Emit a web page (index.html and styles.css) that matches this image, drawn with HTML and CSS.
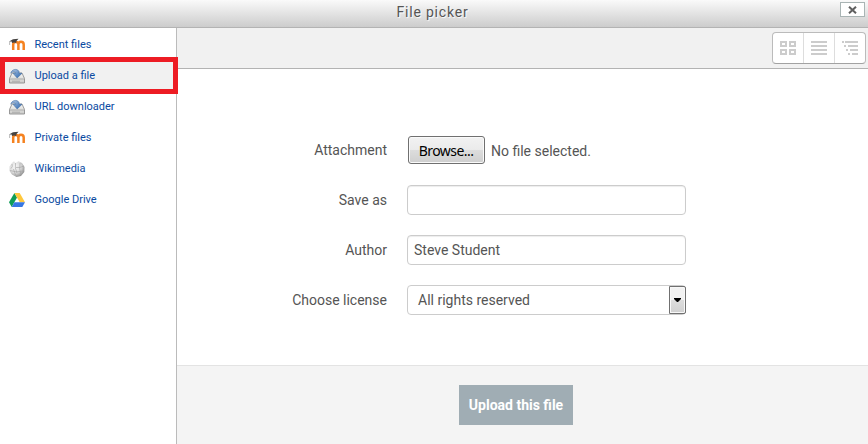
FILE: index.html
```html
<!DOCTYPE html>
<html lang="en">
<head>
<meta charset="utf-8">
<title>File picker</title>
<link rel="stylesheet" href="styles.css">
</head>
<body>
<svg class="defs" aria-hidden="true">
  <defs>
    <linearGradient id="disk" x1="0" y1="0" x2="0" y2="1"><stop offset="0" stop-color="#f8f8f6"/><stop offset="1" stop-color="#c9c9c7"/></linearGradient>
    <linearGradient id="arrow" x1="0" y1="0" x2="1" y2="1"><stop offset="0" stop-color="#b4cae6"/><stop offset="1" stop-color="#2864ad"/></linearGradient>
    <radialGradient id="globe" cx=".38" cy=".35" r=".7"><stop offset="0" stop-color="#f8f8f8"/><stop offset=".55" stop-color="#dcdcdc"/><stop offset="1" stop-color="#8d8d8d"/></radialGradient>
    <symbol id="moodle" viewBox="0 1 16 16">
      <path d="M4.200 14V8.500Q4.200 6 6.700 6Q9.400 6 9.400 8.500V14M9.400 8.500Q9.400 5.700 12 5.700Q14.700 5.700 14.700 8.500V14" fill="none" stroke="#f58220" stroke-width="2.500"/>
      <path d="M0 5.500 4 3.200l5.500-.5L7.500 5 7.200 7Q5 5.800 3 7L2.700 5.600Z" fill="#454341"/>
      <path d="M1 5.400Q.2 7 .7 9" fill="none" stroke="#999" stroke-width=".7"/>
    </symbol>
    <symbol id="drive-disk" viewBox="0 0 16 16">
      <path d="M3 5h10l2.500 5.500v4.500H.5v-4.500z" fill="url(#disk)" stroke="#8f8f8f" stroke-width=".9"/>
      <path d="M.8 11h14.400M3 13.200h8" stroke="#999" stroke-width=".7"/>
      <path d="M1.800 5.200C2.300 1.800 7.600-.3 10 3.300v2h3L8.200 10 4 5.300h2.500C6.500 3.800 4 3 1.800 5.200Z" fill="url(#arrow)" stroke="#416da3" stroke-width=".6"/>
    </symbol>
    <symbol id="wiki" viewBox="0 0 16 16">
      <path d="M3 2 5 .3 6.500 2 9.500.2 13 2 15.500 6 15.300 11 12 15 7.500 15.900 3 13.500.6 10 .5 5.500Z" fill="url(#globe)"/>
      <path d="M3 3Q4 6 2 7.500M6.500 2Q5.500 7 8 12M1 9.500Q7 12 14 10M7 6.500Q11 7 15 5M11 2Q10 8 12 14M4.500 8l2 6" fill="none" stroke="#a0a0a0" stroke-width=".6"/>
    </symbol>
    <symbol id="gdrive" viewBox="0 0 16 16">
      <path d="M5.400 1 8 5.600 2.700 15 0 10.300Z" fill="#0f9d58"/>
      <path d="M5.400 1h5.300L16 10.300h-5.300Z" fill="#ffc83d"/>
      <path d="M5.400 10.300H16L13.300 15H2.700Z" fill="#3777e3"/>
    </symbol>
  </defs>
</svg>
<div class="picker">
  <header class="title">
    <h1>File picker</h1>
    <button class="close" aria-label="Close"><svg width="9" height="8" viewBox="0 0 9 8"><path d="M1 .7 8 7.300M8 .7 1 7.300" stroke="#606060" stroke-width="2"/></svg></button>
  </header>
  <div class="content">
    <nav class="repos">
      <a class="repo"><svg><use href="#moodle"/></svg><span>Recent files</span></a>
      <a class="repo active"><svg><use href="#drive-disk"/></svg><span>Upload a file</span></a>
      <a class="repo"><svg><use href="#drive-disk"/></svg><span>URL downloader</span></a>
      <a class="repo"><svg><use href="#moodle"/></svg><span>Private files</span></a>
      <a class="repo"><svg><use href="#wiki"/></svg><span>Wikimedia</span></a>
      <a class="repo"><svg><use href="#gdrive"/></svg><span>Google Drive</span></a>
    </nav>
    <main class="panel">
      <div class="toolbar">
        <div class="views">
          <button aria-label="Icons"><svg width="16" height="14" viewBox="0 0 16 14"><path d="M1 1h5v4H1zM10 1h5v4h-5zM1 9h5v4H1zM10 9h5v4h-5z" fill="none" stroke="#ccc" stroke-width="2"/></svg></button>
          <button aria-label="List"><svg width="16" height="14" viewBox="0 0 16 14"><path d="M0 1h16M0 5h16M0 9h16M0 13h16" stroke="#ccc" stroke-width="2"/></svg></button>
          <button aria-label="Tree"><svg width="16" height="14" viewBox="0 0 16 14"><path d="M0 1h2M3 1h13M2 5h2M6 5h10M4 9h2M8 9h8M6 13h2M10 13h6" stroke="#ccc" stroke-width="2"/></svg></button>
        </div>
      </div>
      <form class="form">
        <div class="row"><label>Attachment</label><div class="file"><button type="button" class="browse">Browse...</button><span>No file selected.</span></div></div>
        <div class="row"><label>Save as</label><div class="field"></div></div>
        <div class="row"><label>Author</label><div class="field">Steve Student</div></div>
        <div class="row"><label>Choose license</label><div class="field select"><span>All rights reserved</span><i class="drop"><svg width="7" height="4" viewBox="0 0 7 4"><path d="M0 0h7v1L4 4H3L0 1z"/></svg></i></div></div>
      </form>
      <footer class="footer"><button class="upload">Upload this file</button></footer>
    </main>
  </div>
  <div class="marker"></div>
</div>
</body>
</html>
```
FILE: styles.css
```css
* { box-sizing: border-box; }
body { margin: 0; font-family: Roboto, "Liberation Sans", sans-serif; font-size: 14px; color: #555; background: #fff; }
button { font: inherit; margin: 0; padding: 0; }
.defs { position: absolute; width: 0; height: 0; }
.picker { position: relative; width: 868px; height: 444px; display: flex; flex-direction: column; overflow: hidden; }
.title { position: relative; height: 28px; border-bottom: 1px solid #b3b3b3; background: linear-gradient(#fafafa, #ccc); text-align: center; }
.title h1 { margin: 0; font-size: 14px; font-weight: 400; letter-spacing: .8px; line-height: 25px; color: #555; text-shadow: 1px 1px 1px #fff; padding-right: 3px; }
.close { position: absolute; right: 3px; top: 2px; width: 25px; height: 15px; border: 1px solid #a9b4b4; background: #fff; display: flex; align-items: center; justify-content: center; }
.content { flex: 1; display: flex; min-height: 0; }
.repos { width: 177px; border-right: 1px solid #bbb; padding-top: 1px; }
.repo { display: flex; align-items: center; height: 31px; padding-left: 9px; font-size: 11px; color: #0a4aa1; }
.repo svg { width: 16px; height: 16px; margin: 1px 9.5px 0 0; }
.repo.active { background: #f1f1f1; }
.marker { position: absolute; left: 0; top: 57px; width: 178px; height: 37px; border: 5px solid #ed1c24; }
.panel { flex: 1; display: flex; flex-direction: column; }
.toolbar { height: 41px; background: #f1f1f1; border-bottom: 1px solid #b3b3b3; display: flex; justify-content: flex-end; padding: 4px 2px 0 0; }
.views { display: flex; width: 94px; height: 32px; border: 1px solid #bbb; border-bottom-color: #a2a2a2; border-radius: 4px; background: #fff; }
.views button { flex: 1; border: 0; border-right: 1px solid #ddd; background: none; display: flex; align-items: center; justify-content: center; }
.views button:last-child { border: 0; }
.form { flex: 1; padding-top: 66px; display: flex; flex-direction: column; gap: 20px; }
.row { display: flex; align-items: center; height: 30px; }
.row label { width: 210px; margin-right: 20px; text-align: right; }
.field { width: 279px; height: 30px; border: 1px solid #ccc; border-radius: 4px; padding: 0 6px; line-height: 28px; box-shadow: inset 0 1px 1px rgba(0,0,0,.075); }
.select { display: flex; justify-content: space-between; padding: 0 0 0 10px; box-shadow: none; }
.drop { width: 17px; height: 28px; margin-right: -1px; border: 1px solid #707070; border-radius: 0 2px 2px 0; background: linear-gradient(#f2f2f2 50%, #ddd 50%, #d0d0d0); box-shadow: inset 0 0 0 1px #f8f8f8; display: flex; align-items: center; justify-content: center; }
.drop svg { fill: #000; }
.file { display: flex; align-items: center; gap: 6px; padding-left: 1px; line-height: 30px; }
.file span { padding-top: 2px; }
.browse { width: 77px; height: 28px; border: 1px solid #707070; border-radius: 3px; background: linear-gradient(#f2f2f2, #ebebeb 48%, #ddd 50%, #cfcfcf); box-shadow: inset 0 0 0 1px #fafafa; color: #000; font: 14px "Noto Sans", sans-serif; letter-spacing: -.55px; padding: 0 1px 0 0; }
.footer { height: 79px; border-top: 1px solid #e3e3e3; background: #f4f4f4; padding: 19px 0 0 282px; }
.upload { display: block; width: 114px; height: 40px; border: 0; background: #a0adb4; color: #fff; font-weight: 700; }
```
